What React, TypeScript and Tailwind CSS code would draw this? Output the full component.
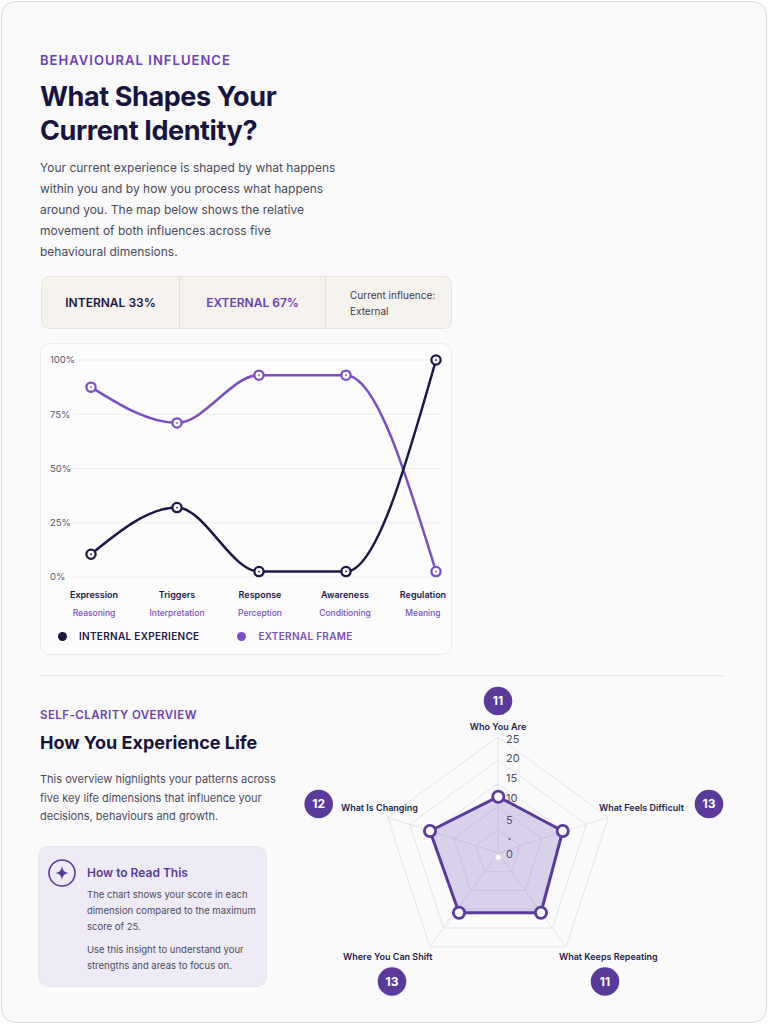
import React from 'react';

type Pt = [number, number];

// d3-style monotoneX curve so the lines flatten at peaks like the reference
function monotonePath(pts: Pt[]): string {
  const n = pts.length;
  const sign = (v: number) => (v < 0 ? -1 : 1);
  const t: number[] = new Array(n).fill(0);
  for (let i = 1; i < n - 1; i++) {
    const [x0, y0] = pts[i - 1];
    const [x1, y1] = pts[i];
    const [x2, y2] = pts[i + 1];
    const h0 = x1 - x0;
    const h1 = x2 - x1;
    const s0 = (y1 - y0) / h0;
    const s1 = (y2 - y1) / h1;
    const p = (s0 * h1 + s1 * h0) / (h0 + h1);
    t[i] = (sign(s0) + sign(s1)) * Math.min(Math.abs(s0), Math.abs(s1), 0.5 * Math.abs(p)) || 0;
  }
  const first = (pts[1][1] - pts[0][1]) / (pts[1][0] - pts[0][0]);
  t[0] = (3 * first - t[1]) / 2;
  const last = (pts[n - 1][1] - pts[n - 2][1]) / (pts[n - 1][0] - pts[n - 2][0]);
  t[n - 1] = (3 * last - t[n - 2]) / 2;

  let d = `M${pts[0][0]},${pts[0][1]}`;
  for (let i = 0; i < n - 1; i++) {
    const [x0, y0] = pts[i];
    const [x1, y1] = pts[i + 1];
    const dx = (x1 - x0) / 3;
    d += ` C${x0 + dx},${y0 + dx * t[i]} ${x1 - dx},${y1 - dx * t[i + 1]} ${x1},${y1}`;
  }
  return d;
}

const NAVY = '#1b1848';
const PURPLE = '#7a4fc3';

const dims = [
  { x: 50, top: 'Expression', sub: 'Reasoning', lx: 53 },
  { x: 136, top: 'Triggers', sub: 'Interpretation', lx: 136 },
  { x: 218, top: 'Response', sub: 'Perception', lx: 219 },
  { x: 305, top: 'Awareness', sub: 'Conditioning', lx: 304 },
  { x: 395, top: 'Regulation', sub: 'Meaning', lx: 382 },
];

const internal = [10.5, 32, 2.5, 2.5, 100];
const external = [87.5, 71, 93, 93, 2.5];

const yOf = (v: number) => 233 - v * 2.17;

function InfluenceChart() {
  const inPts: Pt[] = dims.map((d, i) => [d.x, yOf(internal[i])]);
  const exPts: Pt[] = dims.map((d, i) => [d.x, yOf(external[i])]);
  const ticks = [100, 75, 50, 25, 0];

  return (
    <div className="mt-[14px] w-[412px] h-[312px] rounded-[10px] border border-[#ebebef] bg-[#fcfcfd]">
      <svg width="410" height="282" className="block" style={{ fontFamily: 'Inter, sans-serif' }}>
        {ticks.map((v) => (
          <g key={v}>
            <line x1="32" x2="401" y1={yOf(v)} y2={yOf(v)} stroke="#ededf1" strokeWidth="1" />
            <text x="9" y={yOf(v) + 3.4} fontSize="9.5" fill="#55556a">
              {v}%
            </text>
          </g>
        ))}

        <path d={monotonePath(exPts)} fill="none" stroke={PURPLE} strokeWidth="2.5" />
        <path d={monotonePath(inPts)} fill="none" stroke={NAVY} strokeWidth="2.5" />

        {[
          { pts: exPts, c: PURPLE },
          { pts: inPts, c: NAVY },
        ].map((s, si) =>
          s.pts.map(([x, y], i) => (
            <g key={`${si}-${i}`}>
              <circle cx={x} cy={y} r="4.6" fill="#fff" stroke={s.c} strokeWidth="2.3" />
              <circle cx={x} cy={y} r="0.9" fill={s.c} />
            </g>
          ))
        )}

        {dims.map((d) => (
          <g key={d.top}>
            <text x={d.lx} y="253.5" textAnchor="middle" fontSize="9" fontWeight="600" fill={NAVY}>
              {d.top}
            </text>
            <text x={d.lx} y="271.5" textAnchor="middle" fontSize="8.5" fontWeight="500" fill={PURPLE}>
              {d.sub}
            </text>
          </g>
        ))}
      </svg>
      <div className="flex items-center h-[20px] pl-[17px] text-[10px] font-semibold tracking-[0.03em]">
        <span className="w-[9px] h-[9px] rounded-full bg-[#1b1848]" />
        <span className="ml-[12px] text-[#1b1848]">INTERNAL EXPERIENCE</span>
        <span className="ml-[38px] w-[9px] h-[9px] rounded-full bg-[#7a4fc3]" />
        <span className="ml-[12px] text-[#7a4fc3]">EXTERNAL FRAME</span>
      </div>
    </div>
  );
}

const RC = { x: 208, y: 173 };
const RR = 116;
const angles = [-90, -18, 54, 126, 198].map((a) => (a * Math.PI) / 180);
const ring = (r: number) =>
  angles.map((a) => `${RC.x + r * Math.cos(a)},${RC.y + r * Math.sin(a)}`).join(' ');

const scorePts: Pt[] = [
  [208.3, 116.7],
  [272.7, 151],
  [251, 232.7],
  [169, 232.7],
  [140, 151],
];

const badges = [
  { x: 208, y: 21, v: 11 },
  { x: 28.7, y: 124, v: 12 },
  { x: 419, y: 124, v: 13 },
  { x: 102, y: 301.5, v: 13 },
  { x: 315, y: 301.5, v: 11 },
];

const radarLabels = [
  { x: 208, y: 49.5, t: 'Who You Are', a: 'middle' },
  { x: 51, y: 130.5, t: 'What Is Changing', a: 'start' },
  { x: 309, y: 130.5, t: 'What Feels Difficult', a: 'start' },
  { x: 53, y: 279.5, t: 'Where You Can Shift', a: 'start' },
  { x: 269, y: 279.5, t: 'What Keeps Repeating', a: 'start' },
];

const radarTicks = [
  { y: 63, t: '25' },
  { y: 81.7, t: '20' },
  { y: 101.7, t: '15' },
  { y: 121.7, t: '10' },
  { y: 144, t: '5' },
  { y: 178, t: '0' },
];

function RadarChart() {
  return (
    <svg width="444" height="330" className="block ml-[22px] mt-[4px] shrink-0" style={{ fontFamily: 'Inter, sans-serif' }}>
      {[1, 2, 3, 4, 5].map((k) => (
        <polygon key={k} points={ring(RR * (k / 5))} fill="none" stroke="#e4e2ec" strokeWidth="1" />
      ))}
      {angles.map((a, i) => (
        <line
          key={i}
          x1={RC.x}
          y1={RC.y}
          x2={RC.x + RR * Math.cos(a)}
          y2={RC.y + RR * Math.sin(a)}
          stroke="#e4e2ec"
          strokeWidth="1"
        />
      ))}

      {radarTicks.map((tk) => (
        <text key={tk.t} x="216" y={tk.y} fontSize="11" fill="#4d4d5a">
          {tk.t}
        </text>
      ))}
      <circle cx="219.5" cy="159" r="0.9" fill="#4d4d5a" />

      <polygon
        points={scorePts.map((p) => p.join(',')).join(' ')}
        fill="#7c5cbf"
        fillOpacity="0.26"
        stroke="#5a3a9f"
        strokeWidth="3"
        strokeLinejoin="round"
      />
      {scorePts.map(([x, y], i) => (
        <circle key={i} cx={x} cy={y} r="5.6" fill="#fff" stroke="#5a3a9f" strokeWidth="2.8" />
      ))}
      <circle cx="208.3" cy="177.3" r="3.2" fill="#fff" stroke="#d9d2e8" strokeWidth="1.2" />

      {radarLabels.map((l) => (
        <text
          key={l.t}
          x={l.x}
          y={l.y}
          textAnchor={l.a as 'middle' | 'start'}
          fontSize="9"
          fontWeight="600"
          fill="#1f1c4d"
        >
          {l.t}
        </text>
      ))}

      {badges.map((b, i) => (
        <g key={i}>
          <circle cx={b.x} cy={b.y} r="14.3" fill="#5b3a9c" />
          <text x={b.x} y={b.y + 4.3} textAnchor="middle" fontSize="12" fontWeight="700" fill="#fff">
            {b.v}
          </text>
        </g>
      ))}
    </svg>
  );
}

function SparkleIcon() {
  return (
    <svg width="28" height="28" viewBox="0 0 28 28" className="shrink-0">
      <circle cx="14" cy="14" r="13" fill="none" stroke="#5b3a9c" strokeWidth="1.6" />
      <path
        d="M14 7 C14.7 11.6 16.4 13.3 21 14 C16.4 14.7 14.7 16.4 14 21 C13.3 16.4 11.6 14.7 7 14 C11.6 13.3 13.3 11.6 14 7 Z"
        fill="#5b3a9c"
      />
    </svg>
  );
}

export default function App() {
  return (
    <div className="w-[768px] h-[1024px] p-px bg-white" style={{ fontFamily: 'Inter, "Liberation Sans", sans-serif' }}>
      <div className="h-full rounded-[14px] border border-[#dadadd] bg-[#fafafa] overflow-hidden">
        <div className="pl-[38px] pr-[42px] pt-[50px]">
          <p className="text-[13px] leading-[16px] font-semibold tracking-[0.08em] text-[#6b3fb8]">
            BEHAVIOURAL INFLUENCE
          </p>
          <h1 className="mt-[12px] text-[27px] leading-[34px] font-bold tracking-[-0.015em] text-[#17143f]">
            What Shapes Your
            <br />
            Current Identity?
          </h1>
          <p className="mt-[9px] text-[12px] leading-[21px] text-[#4b4a5c]">
            Your current experience is shaped by what happens
            <br />
            within you and by how you process what happens
            <br />
            around you. The map below shows the relative
            <br />
            movement of both influences across five
            <br />
            behavioural dimensions.
          </p>

          <div className="mt-[14px] ml-px w-[411px] h-[53px] grid grid-cols-[137px_146px_1fr] rounded-[8px] border border-[#ebe3d9] bg-[#f5f1ec]">
            <div className="flex items-center justify-center text-[12px] font-semibold text-[#1b1848]">
              INTERNAL 33%
            </div>
            <div className="flex items-center justify-center border-l border-[#e6ddd2] text-[12px] font-semibold text-[#6b3fb8]">
              EXTERNAL 67%
            </div>
            <div className="flex flex-col justify-center border-l border-[#e6ddd2] pl-[24px] text-[10px] leading-[16px] text-[#3b3a4c]">
              <span>Current influence:</span>
              <span>External</span>
            </div>
          </div>

          <InfluenceChart />

          <div className="mt-[20px] h-px bg-[#e6e6ea]" />

          <div className="flex items-start">
            <div className="w-[228px] shrink-0 pt-[31px]">
              <p className="text-[11.5px] leading-[16px] font-semibold tracking-[0.04em] text-[#6b3fb8]">
                SELF-CLARITY OVERVIEW
              </p>
              <h2 className="mt-[8px] text-[18px] leading-[24px] font-bold text-[#17143f]">
                How You Experience Life
              </h2>
              <p className="mt-[15px] w-[250px] text-[11px] leading-[18.5px] text-[#4b4a5c]">
                This overview highlights your patterns across
                <br />
                five key life dimensions that influence your
                <br />
                decisions, behaviours and growth.
              </p>

              <div className="mt-[20px] -ml-[2px] w-[229px] h-[141px] rounded-[10px] border border-[#e7e1f0] bg-[#efebf6] pl-[9px] pt-[12px] flex gap-[11px]">
                <SparkleIcon />
                <div className="pt-[6px] pr-[8px]">
                  <p className="text-[12px] leading-[16px] font-semibold text-[#5b3a9c]">How to Read This</p>
                  <p className="mt-[6px] text-[9.5px] leading-[16px] text-[#4b4a5c]">
                    The chart shows your score in each dimension compared to the maximum score of 25.
                  </p>
                  <p className="mt-[7px] text-[9.5px] leading-[16.5px] text-[#4b4a5c]">
                    Use this insight to understand your strengths and areas to focus on.
                  </p>
                </div>
              </div>
            </div>

            <RadarChart />
          </div>
        </div>
      </div>
    </div>
  );
}
